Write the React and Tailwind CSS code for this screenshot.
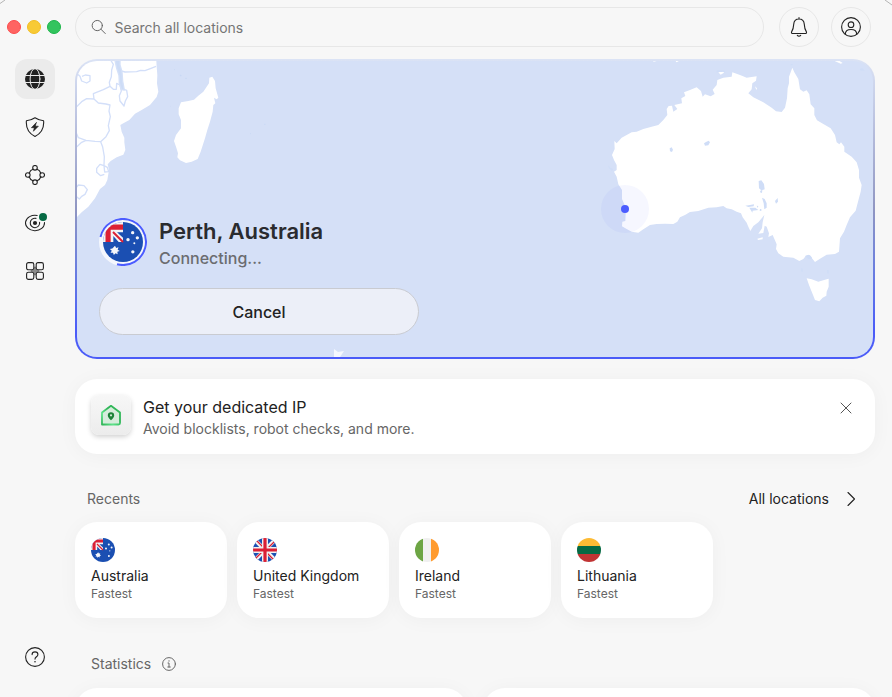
import { useState } from "react";

const Icon = ({ size = 20, children }) => (
  <svg
    width={size}
    height={size}
    viewBox={`0 0 ${size} ${size}`}
    fill="none"
    stroke="currentColor"
    strokeWidth="1.1"
    strokeLinecap="round"
    strokeLinejoin="round"
    aria-hidden="true"
  >
    {children}
  </svg>
);

const GlobeIcon = () => (
  <Icon>
    <circle cx="10" cy="10" r="10" fill="currentColor" stroke="none" />
    <g stroke="#ebebeb" strokeWidth="1">
      <path d="M0 6.500h20M0 13.500h20" />
      <ellipse cx="10" cy="10" rx="4.900" ry="10.400" />
    </g>
  </Icon>
);

const ShieldIcon = () => (
  <Icon>
    <path d="M10 .7c2.600 1.700 5.400 2.700 8.600 3 .6 6.600-2 12.300-8.600 15.700C3.400 16 .8 10.300 1.400 3.700 4.600 3.400 7.400 2.400 10 .7z" />
    <path d="M11.300 5.600 6.400 10.700h2.900l-.9 3.600 5-5.100h-3z" fill="currentColor" strokeWidth=".6" />
  </Icon>
);

const MeshIcon = () => (
  <Icon>
    <circle cx="10" cy="2.800" r="2.300" />
    <circle cx="17.200" cy="10" r="2.300" />
    <circle cx="10" cy="17.200" r="2.300" />
    <circle cx="2.800" cy="10" r="2.300" />
    <path d="M8 4.300C6 4.900 4.900 6 4.300 8M12 4.300c2 .6 3.100 1.700 3.700 3.700M4.300 12c.6 2 1.700 3.100 3.700 3.700M15.700 12c-.6 2-1.700 3.100-3.700 3.700" />
  </Icon>
);

const EyeIcon = () => (
  <Icon>
    <path d="M12.200 2.500A9.500 7.700 0 1 0 19.500 9.600" />
    <path d="M11 5.400A4.700 4.700 0 1 0 14.600 9.300" />
    <circle cx="10" cy="10" r="2.100" fill="currentColor" stroke="none" />
  </Icon>
);

const AppsIcon = () => (
  <Icon>
    <path d="M10 6.500v7M6.500 10h7" stroke="#8b8b8b" strokeWidth="2" />
    <g fill="#f7f7f7">
      <rect x="1.600" y="1.600" width="7.200" height="7.200" rx="1.800" />
      <rect x="11.200" y="1.600" width="7.200" height="7.200" rx="1.800" />
      <rect x="1.600" y="11.200" width="7.200" height="7.200" rx="1.800" />
      <rect x="11.200" y="11.200" width="7.200" height="7.200" rx="1.800" />
    </g>
  </Icon>
);

const HelpIcon = () => (
  <Icon>
    <circle cx="10" cy="10" r="9.400" />
    <path d="M7.100 7.600c0-1.700 1.300-2.700 2.900-2.700s2.900 1 2.900 2.600c0 2.300-2.900 2.300-2.900 4.600" />
    <circle cx="10" cy="14.700" r=".8" fill="currentColor" stroke="none" />
  </Icon>
);

const BellIcon = () => (
  <Icon>
    <path d="M10 .6v1.200M10 2c-3.200 0-5.100 2.300-5.300 5.400C4.500 11.300 4 12.600 2.700 14.600c-.6 1 0 1.900 1 1.900h12.600c1 0 1.600-.9 1-1.900-1.300-2-1.800-3.300-2-7.200C15.100 4.300 13.200 2 10 2z" />
    <path d="M8.300 18.400c.9 1 2.500 1 3.400 0" />
  </Icon>
);

const UserIcon = () => (
  <Icon>
    <circle cx="10" cy="10" r="9.400" />
    <circle cx="10" cy="7.700" r="2.800" />
    <path d="M4.300 17.300c0-3.200 2-4.800 5.700-4.800s5.700 1.600 5.700 4.800" />
  </Icon>
);

const AustraliaFlag = ({ size }) => (
  <svg width={size} height={size} viewBox="0 0 24 24" className="rounded-full" aria-hidden="true">
    <path d="M0 0h24v24H0z" fill="#1b4fb2" />
    <path d="M0 0h12v12H0z" fill="#f3f3f6" />
    <path d="M0 1.500h12v3.100H4.600V12H1.500V1.500z" fill="#dc1f35" />
    <path d="M8.400 6.200H12v3.200zM6.200 8.400V12h3.200z" fill="#1b4fb2" />
    <path d="M6 6 12 12" stroke="#dc1f35" strokeWidth="1.200" />
    <g fill="#f5f6fa">
      <path d="m7.200 14.300.7 1.300 1.400-.4-.5 1.400 1.300.8-1.500.5.2 1.500-1.300-.7-1 1.100-.5-1.400-1.500.1.800-1.300-1.200-1 1.500-.3z" />
      <circle cx="17.800" cy="6.400" r="1" />
      <circle cx="15" cy="10.600" r="1" />
      <circle cx="20.600" cy="9.500" r="1" />
      <circle cx="18.800" cy="12.800" r=".6" />
      <circle cx="17.900" cy="17.900" r="1" />
    </g>
  </svg>
);

const UnitedKingdomFlag = ({ size }) => (
  <svg width={size} height={size} viewBox="0 0 24 24" className="rounded-full" aria-hidden="true">
    <path d="M0 0h24v24H0z" fill="#1b4fb2" />
    <path d="m0 0 24 24M24 0 0 24" stroke="#f0f0f0" strokeWidth="4" />
    <path d="m3 2 7 7M21 22l-7-7M22 3l-7 7M2 21l7-7" stroke="#dc1f35" strokeWidth="1.300" />
    <path d="M12 0v24M0 12h24" stroke="#f0f0f0" strokeWidth="6" />
    <path d="M12 0v24M0 12h24" stroke="#dc1f35" strokeWidth="3.200" />
  </svg>
);

const IrelandFlag = ({ size }) => (
  <svg width={size} height={size} viewBox="0 0 24 24" className="rounded-full" aria-hidden="true">
    <path d="M0 0h8v24H0z" fill="#6da544" />
    <path d="M8 0h8v24H8z" fill="#f0f0f0" />
    <path d="M16 0h8v24h-8z" fill="#ff9b2e" />
  </svg>
);

const LithuaniaFlag = ({ size }) => (
  <svg width={size} height={size} viewBox="0 0 24 24" className="rounded-full" aria-hidden="true">
    <path d="M0 0h24v8H0z" fill="#fdbb34" />
    <path d="M0 8h24v8H0z" fill="#066a44" />
    <path d="M0 16h24v8H0z" fill="#c13434" />
  </svg>
);

const WorldMap = () => (
  <svg
    className="absolute inset-0 h-full w-full"
    viewBox="2 2 796 296"
    preserveAspectRatio="xMidYMid slice"
    aria-hidden="true"
  >
    {/* AFRICA + MADAGASCAR */}
    <g transform="translate(-5 -4) scale(.33333)" fill="#fff" stroke="#d3dff9" strokeWidth="4" strokeLinejoin="round">
      <path
        stroke="none"
        d="M0 0H258L260 35 262 60 261 85 265 110 260 126 240 150 215 165 195 176 178 195 160 205 151 210 155 230 163 248 163 262 166 285 160 299 140 307 122 318 113 328 117 345 112 375 105 390 90 402 75 430 55 455 35 472 15 492 0 500z"
      />
      <path d="M148 46 165 51 200 50 212 46 225 47 243 40 258 34M120 12 130 28 125 45 124 65 118 82 120 94 100 104 70 116 72 132 50 131 35 140 15 160M72 132 85 144 108 147 120 150 117 168 121 185 115 212 118 227 108 245 92 260 75 259 48 256 25 248 15 225M48 256 35 262 15 280M92 260 98 276 103 305 102 330M15 50 30 64 35 78 50 84 60 78 60 62 46 60 36 64M120 94 130 103 139 103 140 85 150 90 160 102 170 106 173 125 166 138 162 153 150 138 148 122 154 108 150 90" fill="none" />
      <path d="M102 332 90 328 80 340 80 352 92 362 103 358M102 332 112 337 116 350 104 351zM15 402 25 390 42 392 52 404 45 418 35 424 28 432 18 424" fill="none" />
      <path d="M134 12 150 12 150 30 156 50 158 78 163 105 154 104 148 84 147 62 140 40z" fill="#cddcf6" stroke="#d5e1f8" />
      <path
        stroke="none"
        d="M427 65 435 78 437 100 445 128 440 133 432 128 436 145 430 150 428 170 420 200 412 225 405 250 392 290 383 312 365 320 348 324 330 316 322 307 324 295 319 278 312 258 318 240 333 220 333 195 326 178 326 160 333 142 355 138 372 134 385 122 400 110 410 95 417 85 418 68z"
      />
      <path d="M312 44h2M330 60l4 3M346 70h4M302 154h1M540 236h2M583 208h3" stroke="#c8d8f5" />
    </g>

    {/* AUSTRALIA */}
    <g transform="translate(515 -4) scale(.33333)" fill="#fff">
      <path d="M607 38 613 52 625 72 630 103 640 110 650 106 658 118 662 148 673 160 673 180 681 196 700 207 722 220 735 240 740 262 748 268 753 262 763 275 763 290 785 305 800 322 807 345 807 368 815 390 812 410 804 440 797 467 780 487 770 510 762 530 750 550 747 590 735 597 710 599 690 611 675 621 666 610 660 600 648 602 640 612 628 618 610 608 580 605 565 595 558 582 560 568 548 540 535 546 537 535 530 515 524 512 520 534 505 536 516 520 518 502 523 480 505 502 490 513 481 528 475 515 470 503 458 487 453 475 440 470 425 463 410 460 400 453 380 457 355 458 325 468 300 471 285 480 270 487 262 500 250 507 225 506 200 507 180 510 160 523 145 533 125 530 110 522 96 514 97 500 106 498 107 475 104 450 96 432 96 405 85 388 80 365 72 350 80 345 80 330 72 315 66 300 74 282 73 258 80 265 95 248 125 232 140 230 160 222 185 215 205 210 220 195 232 180 230 162 236 153 246 152 250 170 262 162 253 150 276 145 274 130 286 123 282 112 300 105 320 97 333 108 338 125 345 118 362 124 374 117 368 104 380 90 382 75 400 68 425 65 427 52 450 60 470 68 500 64 498 77 487 85 485 103 475 115 490 127 520 142 545 158 558 169 575 171 585 158 591 130 593 100 597 85 597 65z" />
      <path d="M650 670 665 673 685 680 705 674 716 671 716 695 710 710 709 722 698 728 688 739 675 735 670 722 663 705 657 690z" />
      <path d="M502 551 518 547 518 553 504 555zM184 12h14l2 6-9 2zM257 12h20l-14 8-5 2zM704 12h28l12 3 14 9-6 2-18-8-20-2zM385 52l14-4 3 5-10 6zM495 94l6 6-2 5z" />
      <g fill="#cfddf7">
        <path d="M239 280 245 277 249 284 246 291 240 289zM342 265 348 261 356 257 360 262 355 271 345 272zM506 378 514 376 522 387 524 403 514 406 507 400zM511 407 517 405 516 414 510 412zM516 428 524 432 530 445 530 458 523 463 521 445zM555 438 563 429 564 440 558 446zM466 452 480 450 492 448 491 454 475 456zM478 458 496 458 505 465 488 467 487 473zM500 452 505 453 503 459zM510 462 514 462 514 468 509 467zM645 603 655 599 665 606 665 612 655 612 650 608z" />
        <path d="M55 330 60 338 70 342 66 348 56 338zM634 640 638 641 638 650 634 650zM711 645 716 646 716 656 712 655zM380 46h22l4 4-26 2zM498 50 502 42 494 56zM602 27h6v4h-6zM808 42 818 40 824 47 812 47z" />
      </g>
    </g>

    {/* ANTARCTIC ISLANDS */}
    <path d="M259 290l4 3 6-1-4 6h-6z" fill="#f5f8fe" />

    {/* CURRENT SERVER */}
    <circle cx="550" cy="150" r="24" fill="#4b5cff" fillOpacity=".05" />
    <circle cx="550" cy="150" r="4" fill="#4b5cff" />
  </svg>
);

const navItems = [
  { label: "Locations", icon: GlobeIcon, active: true },
  { label: "Threat protection", icon: ShieldIcon },
  { label: "Mesh network", icon: MeshIcon },
  { label: "Monitoring", icon: EyeIcon, badge: true },
  { label: "More apps", icon: AppsIcon },
];

const recents = [
  { name: "Australia", flag: AustraliaFlag },
  { name: "United Kingdom", flag: UnitedKingdomFlag },
  { name: "Ireland", flag: IrelandFlag },
  { name: "Lithuania", flag: LithuaniaFlag },
];

const Sidebar = () => (
  <aside className="flex w-[75px] shrink-0 flex-col pb-5">
    <div className="flex h-[59px] gap-1.5 pt-5 pl-[7px]">
      <button aria-label="Close" className="h-3.5 w-3.5 rounded-full border border-[#fc4a4c] bg-[#ff6462]" />
      <button aria-label="Minimize" className="h-3.5 w-3.5 rounded-full border border-[#f3bd22] bg-[#f8ca35]" />
      <button aria-label="Zoom" className="h-3.5 w-3.5 rounded-full border border-[#1cb549] bg-[#33c45e]" />
    </div>

    <nav className="flex flex-col gap-2 pl-[15px]">
      {navItems.map(({ label, icon: NavIcon, active, badge }) => (
        <button
          key={label}
          aria-label={label}
          className={`relative flex h-10 w-10 items-center justify-center rounded-xl ${
            active ? "bg-[#ebebeb]" : ""
          }`}
        >
          <NavIcon />
          {badge && (
            <span className="absolute top-2.5 right-2 h-2 w-2 rounded-full bg-[#066a44] ring-1 ring-[#f7f7f7]" />
          )}
        </button>
      ))}
    </nav>

    <button aria-label="Help" className="mt-auto ml-[15px] flex h-10 w-10 items-center justify-center">
      <HelpIcon />
    </button>
  </aside>
);

const TopBar = () => (
  <header className="flex h-[59px] shrink-0 items-start pt-[7px] pr-1">
    <label className="flex h-10 flex-1 items-center gap-2 rounded-full border border-[#e7e7e7] px-[15px] text-[#5f5f5f]">
      <Icon size={16}>
        <circle cx="6.500" cy="6.500" r="5.300" strokeWidth="1" />
        <path d="m10.400 10.400 4.400 4.400" strokeWidth="1" />
      </Icon>
      <input
        type="text"
        aria-label="Search all locations"
        placeholder="Search all locations"
        className="w-full bg-transparent pt-0.5 text-sm outline-none placeholder:text-[#757575]"
      />
    </label>
    <button
      aria-label="Notifications"
      className="ml-[15px] flex h-10 w-10 items-center justify-center rounded-full border border-[#e7e7e7]"
    >
      <BellIcon />
    </button>
    <button
      aria-label="Account"
      className="ml-3 flex h-10 w-10 items-center justify-center rounded-full border border-[#e7e7e7]"
    >
      <UserIcon />
    </button>
  </header>
);

const ConnectionCard = () => (
  <section className="shrink-0 rounded-[22px] bg-linear-to-b from-[#dbe3f5] via-[#9096c2] to-[#4b5cf8] to-90% p-0.5">
    <div className="relative flex h-[296px] flex-col justify-end overflow-hidden rounded-[20px] bg-[#d5e0f7] p-[22px]">
      <WorldMap />
      <div className="relative w-80 max-w-full">
        <div className="flex items-start gap-3">
          <div className="relative flex h-12 w-12 items-center justify-center rounded-full bg-[#f5f7fd]">
            <AustraliaFlag size={40} />
            <svg className="absolute inset-0" width="48" height="48" viewBox="0 0 48 48" fill="none" aria-hidden="true">
              <path d="M1.500 19A23 23 0 1 1 18 46.200" stroke="#4b5cff" strokeWidth="2" />
            </svg>
          </div>
          <div>
            <h1 className="text-[22px] leading-[26px] font-semibold text-[#2a2b2f]">Perth, Australia</h1>
            <p className="text-base leading-7 font-medium text-[#6b6c70]">Connecting...</p>
          </div>
        </div>
        <button className="mt-4 h-[47px] w-full rounded-full border border-[#c9cbd1] bg-[#eceff8] text-base font-medium text-[#222]">
          Cancel
        </button>
      </div>
    </div>
  </section>
);

const DedicatedIpBanner = ({ onClose }) => (
  <section className="mt-5 flex h-[75px] shrink-0 items-center gap-3 rounded-[22px] bg-white px-4 shadow-[0_2px_20px_rgba(0,0,0,0.04)]">
    <div className="mb-1 flex h-10 w-10 shrink-0 items-center justify-center rounded-lg bg-linear-to-b from-[#f7f7f7] to-[#ececec] shadow-[0_2px_5px_rgba(0,0,0,0.18)]">
      <svg width="22" height="22" viewBox="0 0 22 22" fill="none" aria-hidden="true">
        <defs>
          <linearGradient id="house" x1="0" y1="1" x2="1" y2="0">
            <stop offset="0" stopColor="#2fb457" />
            <stop offset=".3" stopColor="#5fe38b" />
            <stop offset=".6" stopColor="#2fb457" />
            <stop offset="1" stopColor="#36bd5d" />
          </linearGradient>
        </defs>
        <path
          d="M2 20.500V8.500L11 1.800l9 6.700v10.500c0 .9-.6 1.500-1.500 1.500z"
          fill="#d6ecdc"
          stroke="url(#house)"
          strokeWidth="1.800"
          strokeLinejoin="round"
        />
        <path d="M11 8.200a3.200 3.200 0 0 0-3.200 3.200c0 2 1.700 3.200 3.200 4.900 1.500-1.700 3.200-2.900 3.200-4.900A3.200 3.200 0 0 0 11 8.200z" fill="#1d8238" />
        <circle cx="11" cy="11.300" r="1.100" fill="#d6ecdc" />
      </svg>
    </div>
    <div className="flex-1">
      <h2 className="text-base leading-6 text-[#222]">Get your dedicated IP</h2>
      <p className="text-sm leading-5 text-[#666]">Avoid blocklists, robot checks, and more.</p>
    </div>
    <button aria-label="Dismiss" onClick={onClose} className="mr-1.5 mb-[18px] text-[#555]">
      <Icon size={14}>
        <path d="m2 2 10 10M12 2 2 12" strokeWidth="1" />
      </Icon>
    </button>
  </section>
);

const RecentCard = ({ name, flag: Flag }) => (
  <button className="h-24 w-[152px] rounded-[22px] bg-white px-4 text-left shadow-[0_2px_20px_rgba(0,0,0,0.04)]">
    <Flag size={24} />
    <span className="mt-1 block text-sm leading-5 text-[#222]">{name}</span>
    <span className="block text-xs leading-4 text-[#666]">Fastest</span>
  </button>
);

export default function App() {
  const [showBanner, setShowBanner] = useState(true);

  return (
    <div className="relative flex h-screen overflow-hidden bg-[#f7f7f7] font-['Inter',sans-serif] text-[#222]">
      {/* WINDOW CORNERS */}
      <svg className="absolute top-0 left-0" width="8" height="8" fill="none" stroke="#b5b5b5" aria-hidden="true">
        <path d="M0 3.500 5 0" />
      </svg>
      <svg className="absolute top-0 right-0" width="8" height="8" fill="none" stroke="#b5b5b5" aria-hidden="true">
        <path d="M1 0 8 5" />
      </svg>

      <Sidebar />

      <main className="flex min-w-0 flex-1 flex-col pr-[17px]">
        <TopBar />
        <ConnectionCard />
        {showBanner && <DedicatedIpBanner onClose={() => setShowBanner(false)} />}

        {/* RECENTS */}
        <div className="mt-[35px] flex h-5 shrink-0 items-center justify-between pr-4 pl-3 text-sm">
          <h2 className="text-[#666]">Recents</h2>
          <a href="#locations" className="flex items-center gap-3.5">
            All locations
            <Icon size={16}>
              <path d="m5 1.500 6.500 6.500L5 14.500" />
            </Icon>
          </a>
        </div>
        <div className="mt-[13px] flex shrink-0 gap-2.5">
          {recents.map((item) => (
            <RecentCard key={item.name} {...item} />
          ))}
        </div>

        {/* STATISTICS */}
        <div className="mt-9 flex h-5 shrink-0 items-center gap-[11px] pl-4 text-sm text-[#666]">
          <h2>Statistics</h2>
          <Icon size={14}>
            <circle cx="7" cy="7" r="6.400" strokeWidth="1" />
            <path d="M6 6h1v4M5.800 10h2.500" strokeWidth="1" />
            <circle cx="7" cy="3.900" r=".7" fill="currentColor" stroke="none" />
          </Icon>
        </div>
        <div className="mt-3.5 grid shrink-0 grid-cols-2 gap-4">
          <div className="h-32 rounded-[22px] bg-white shadow-[0_2px_20px_rgba(0,0,0,0.04)]" />
          <div className="h-32 rounded-[22px] bg-white shadow-[0_2px_20px_rgba(0,0,0,0.04)]" />
        </div>
      </main>
    </div>
  );
}
